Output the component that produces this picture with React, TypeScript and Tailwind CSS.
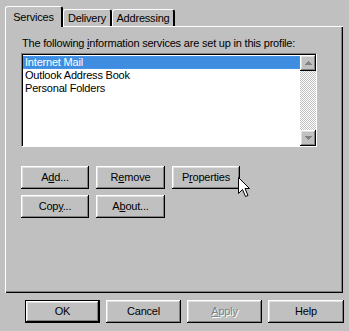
import React from "react";

const raised =
  "shadow-[inset_-1px_-1px_#000000,inset_1px_1px_#ffffff,inset_-2px_-2px_#808080,inset_2px_2px_#dfdfdf]";

function Btn(props: { label: React.ReactNode; w: string; def?: boolean; disabled?: boolean }) {
  const inner = (
    <div
      className={`flex h-full w-full items-center justify-center bg-[#c0c0c0] ${raised} ${
        props.disabled ? "text-[#808080] [text-shadow:1px_1px_0_#ffffff]" : "text-black"
      }`}
    >
      {props.label}
    </div>
  );
  if (props.def) {
    return <div className={`${props.w} h-[23px] border border-black`}>{inner}</div>;
  }
  return <div className={`${props.w} h-[23px]`}>{inner}</div>;
}

function U(props: { children: React.ReactNode }) {
  return <span className="underline underline-offset-[1px]">{props.children}</span>;
}

function Tab(props: { label: string; active?: boolean; w: string }) {
  return (
    <div
      className={`${props.w} ${
        props.active ? "h-[21px] -mb-[1px] z-10" : "h-[17px]"
      } relative flex items-center justify-center rounded-t-[3px] border-l border-t border-white border-r-2 border-r-[#000] bg-[#c0c0c0]`}
    >
      <span>{props.label}</span>
    </div>
  );
}

export default function App() {
  return (
    <div
      className="relative h-[331px] w-[349px] overflow-hidden bg-[#c0c0c0] text-[11px] leading-[13px] tracking-[-0.2px] text-black"
      style={{ fontFamily: '"Liberation Sans", Arial, sans-serif' }}
    >
      <div className="flex items-end pl-[5px] pt-[6px]">
        <Tab label="Services" active w="w-[58px]" />
        <Tab label="Delivery" w="w-[49px]" />
        <Tab label="Addressing" w="w-[63px]" />
      </div>
      <div className="mx-[5px] mr-[6px] h-[267px] border-l border-t border-white shadow-[inset_-1px_-1px_#000000,inset_-2px_-2px_#808080] pl-[15px] pt-[10px]">
        <div className="h-[14px] pl-[1px]">
          The following <U>i</U>nformation services are set up in this profile:
        </div>
        <div className="mt-[2px] flex h-[94px] w-[296px] border-l border-t border-[#808080] border-r border-b border-r-white border-b-white">
          <div className="flex flex-1 border-l border-t border-black bg-white">
            <div className="flex-1 pt-[1px]">
              <div className="h-[13px] bg-[#3e8de0] text-white outline-1 outline-dotted outline-[#d08020] -outline-offset-1 pl-[2px]">
                Internet Mail
              </div>
              <div className="h-[13px] pl-[2px]">Outlook Address Book</div>
              <div className="h-[13px] pl-[2px]">Personal Folders</div>
            </div>
            <div className="flex w-[16px] flex-col bg-[repeating-conic-gradient(#c0c0c0_0_25%,#ffffff_0_50%)] bg-[length:2px_2px]">
              <div className={`flex h-[16px] items-center justify-center bg-[#c0c0c0] ${raised}`}>
                <svg width="7" height="4" viewBox="0 0 7 4">
                  <path d="M3 0h1v1h1v1h1v1h1v1H0V3h1V2h1V1h1z" fill="#808080" />
                </svg>
              </div>
              <div className="flex-1" />
              <div className={`flex h-[16px] items-center justify-center bg-[#c0c0c0] ${raised}`}>
                <svg width="7" height="4" viewBox="0 0 7 4">
                  <path d="M0 0h7v1H6v1H5v1H4v1H3V3H2V2H1V1H0z" fill="#808080" />
                </svg>
              </div>
            </div>
          </div>
        </div>
        <div className="mt-[19px] flex gap-[7px]">
          <Btn w="w-[68px]" label={<span>A<U>d</U>d...</span>} />
          <Btn w="w-[69px]" label={<span>R<U>e</U>move</span>} />
          <Btn w="w-[68px]" label={<span>P<U>r</U>operties</span>} />
        </div>
        <div className="mt-[6px] flex gap-[7px]">
          <Btn w="w-[68px]" label={<span>Cop<U>y</U>...</span>} />
          <Btn w="w-[69px]" label={<span>A<U>b</U>out...</span>} />
        </div>
      </div>
      <div className="mt-[7px] flex gap-[6px] pl-[25px]">
        <Btn w="w-[75px]" def label="OK" />
        <Btn w="w-[75px]" label="Cancel" />
        <Btn w="w-[75px]" disabled label={<span><U>A</U>pply</span>} />
        <Btn w="w-[76px]" label="Help" />
      </div>
      <svg
        className="absolute left-[238px] top-[177px]"
        width="12"
        height="20"
        viewBox="0 0 12 20"
      >
        <path
          d="M0.5 0.5V16.5L4.5 12.5L7.5 19.5L10 18.5L7 11.5H11.5Z"
          fill="#ffffff"
          stroke="#000000"
          strokeWidth="1"
        />
      </svg>
    </div>
  );
}
